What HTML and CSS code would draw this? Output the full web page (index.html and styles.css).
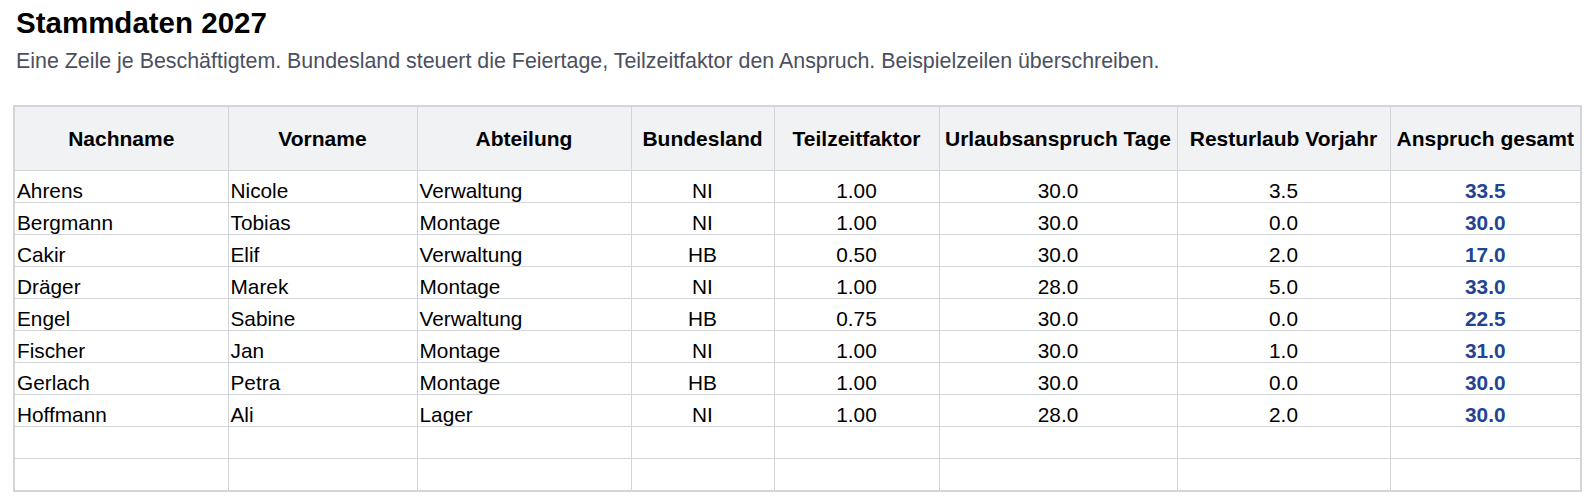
FILE: index.html
```html
<!DOCTYPE html>
<html lang="de">
<head>
<meta charset="utf-8">
<title>Stammdaten 2027</title>
<link rel="stylesheet" href="styles.css">
</head>
<body>
<header class="intro">
  <h1 class="title">Stammdaten 2027</h1>
  <p class="subtitle">Eine Zeile je Beschäftigtem. Bundesland steuert die Feiertage, Teilzeitfaktor den Anspruch. Beispielzeilen überschreiben.</p>
</header>
<table class="sheet">
  <colgroup>
    <col class="c1"><col class="c2"><col class="c3"><col class="c4"><col class="c5"><col class="c6"><col class="c7"><col class="c8">
  </colgroup>
  <thead>
    <tr>
      <th>Nachname</th><th>Vorname</th><th>Abteilung</th><th>Bundesland</th><th>Teilzeitfaktor</th><th>Urlaubsanspruch Tage</th><th>Resturlaub Vorjahr</th><th>Anspruch gesamt</th>
    </tr>
  </thead>
  <tbody>
    <tr><td>Ahrens</td><td>Nicole</td><td>Verwaltung</td><td class="num">NI</td><td class="num">1.00</td><td class="num">30.0</td><td class="num">3.5</td><td class="num total">33.5</td></tr>
    <tr><td>Bergmann</td><td>Tobias</td><td>Montage</td><td class="num">NI</td><td class="num">1.00</td><td class="num">30.0</td><td class="num">0.0</td><td class="num total">30.0</td></tr>
    <tr><td>Cakir</td><td>Elif</td><td>Verwaltung</td><td class="num">HB</td><td class="num">0.50</td><td class="num">30.0</td><td class="num">2.0</td><td class="num total">17.0</td></tr>
    <tr><td>Dräger</td><td>Marek</td><td>Montage</td><td class="num">NI</td><td class="num">1.00</td><td class="num">28.0</td><td class="num">5.0</td><td class="num total">33.0</td></tr>
    <tr><td>Engel</td><td>Sabine</td><td>Verwaltung</td><td class="num">HB</td><td class="num">0.75</td><td class="num">30.0</td><td class="num">0.0</td><td class="num total">22.5</td></tr>
    <tr><td>Fischer</td><td>Jan</td><td>Montage</td><td class="num">NI</td><td class="num">1.00</td><td class="num">30.0</td><td class="num">1.0</td><td class="num total">31.0</td></tr>
    <tr><td>Gerlach</td><td>Petra</td><td>Montage</td><td class="num">HB</td><td class="num">1.00</td><td class="num">30.0</td><td class="num">0.0</td><td class="num total">30.0</td></tr>
    <tr><td>Hoffmann</td><td>Ali</td><td>Lager</td><td class="num">NI</td><td class="num">1.00</td><td class="num">28.0</td><td class="num">2.0</td><td class="num total">30.0</td></tr>
    <tr class="empty"><td></td><td></td><td></td><td></td><td></td><td></td><td></td><td></td></tr>
    <tr class="empty"><td></td><td></td><td></td><td></td><td></td><td></td><td></td><td></td></tr>
  </tbody>
</table>
</body>
</html>
```
FILE: styles.css
```css
html, body {
  margin: 0;
  padding: 0;
  background: #ffffff;
}
body {
  padding: 0 13px;
  font-family: "Liberation Sans", Arial, sans-serif;
  color: #000;
}
.intro {
  padding: 5px 3px 0;
}
.title {
  margin: 0;
  font-size: 29.5px;
  line-height: 36px;
  font-weight: bold;
  color: #000;
}
.subtitle {
  margin: 6px 0 0;
  font-size: 21.4px;
  line-height: 28px;
  color: #4b5060;
}
.sheet {
  margin-top: 30px;
  width: 1567px;
  border-collapse: collapse;
  table-layout: fixed;
  border: 2px solid #d3d5da;
  font-size: 20.8px;
}
.c1 { width: 214px; }
.c2 { width: 189px; }
.c3 { width: 214px; }
.c4 { width: 143px; }
.c5 { width: 165px; }
.c6 { width: 238px; }
.c7 { width: 213px; }
.c8 { width: 191px; }
.sheet th,
.sheet td {
  border: 1px solid #d3d5da;
  padding: 0 2px;
  white-space: nowrap;
  overflow: hidden;
}
.sheet th {
  height: 63px;
  background: #f1f2f4;
  font-weight: bold;
  font-size: 21px;
  text-align: center;
}
.sheet td {
  height: 31px;
  text-align: left;
  vertical-align: bottom;
  line-height: 23px;
}
.sheet td.num {
  text-align: center;
}
.sheet td.total {
  font-weight: bold;
  color: #1f4593;
}
```
